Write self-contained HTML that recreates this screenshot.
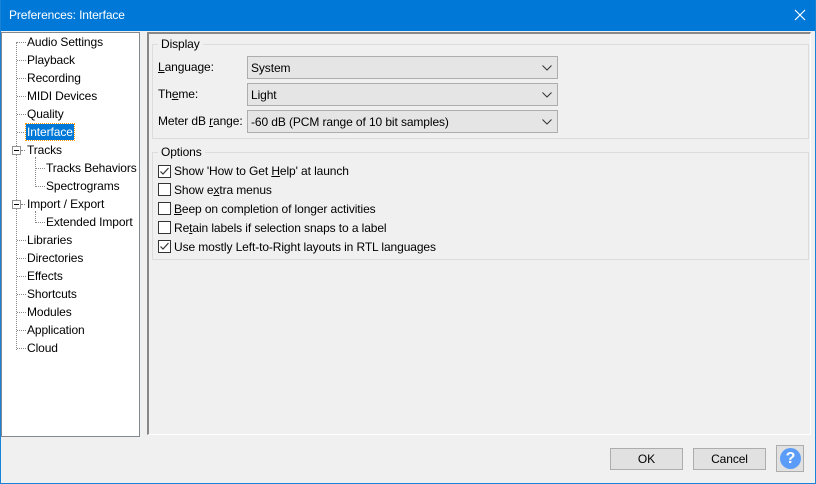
<!DOCTYPE html>
<html><head><style>
*{box-sizing:border-box;margin:0;padding:0}
body{width:816px;height:484px;background:#f0f0f0;font-family:"Liberation Sans",sans-serif;font-size:12px;letter-spacing:-0.1px;color:#000;position:relative;overflow:hidden}
.abs{position:absolute}
#win{left:0;top:0;width:816px;height:484px;border:1px solid #1883d7;border-top:none}
#title{left:0;top:0;width:816px;height:31px;background:#0078d7;color:#fff;font-size:12px;line-height:31px;padding-left:9px}
#tree{left:1px;top:32px;width:139px;height:405px;background:#fff;border:1px solid #828790}
.ti{position:absolute;white-space:nowrap;line-height:14px}
.dh{position:absolute;border-top:1px dotted #888;width:9px}
.dv{position:absolute;border-left:1px dotted #888}
#panel{left:147px;top:32px;width:664px;height:403px;border-left:2px solid #888;border-top:2px solid #888;border-right:1px solid #fff;border-bottom:1px solid #fff}
.grp{position:absolute;border:1px solid #dcdcdc}
.gl{position:absolute;background:#f0f0f0;padding:0 3px;top:-8px;left:5px;line-height:14px}
.combo{position:absolute;left:247px;width:311px;height:23px;background:#e5e5e5;border:1px solid #adadad;padding-left:3px;line-height:23px}
.combo svg{position:absolute;right:5px;top:8px}
.lbl{position:absolute;left:158px;line-height:14px}
.cb{position:absolute;left:158px;width:13px;height:13px;border:1px solid #333;background:#fff}
.ct{position:absolute;left:174px;line-height:14px}
.btn{position:absolute;top:448px;height:22px;background:#e1e1e1;border:1px solid #adadad;text-align:center;line-height:20px}
</style></head><body>
<div class="abs" id="title">Preferences: Interface</div>
<svg class="abs" style="left:794px;top:9px" width="12" height="12"><path d="M1 1L11 11M11 1L1 11" stroke="#fff" stroke-width="1.2"/></svg>
<div class="abs" id="win"></div>
<div class="abs" id="tree">
<div class="dv" style="left:14px;top:9px;height:308px"></div>
<div class="dh" style="left:15px;top:9px"></div><div class="ti" style="left:25px;top:2px">Audio Settings</div>
<div class="dh" style="left:15px;top:27px"></div><div class="ti" style="left:25px;top:20px">Playback</div>
<div class="dh" style="left:15px;top:45px"></div><div class="ti" style="left:25px;top:38px">Recording</div>
<div class="dh" style="left:15px;top:63px"></div><div class="ti" style="left:25px;top:56px">MIDI Devices</div>
<div class="dh" style="left:15px;top:81px"></div><div class="ti" style="left:25px;top:74px">Quality</div>
<div class="dh" style="left:15px;top:99px"></div><div class="ti" style="left:24px;top:91px;background:#0078d7;color:#fff;padding:0 1px;outline:1px dotted #f90;height:16px;line-height:16px">Interface</div>
<div style="position:absolute;left:10px;top:113px;width:9px;height:9px;border:1px solid #919191;background:#fff"><div style="position:absolute;left:1px;top:3px;width:5px;border-top:1px solid #000"></div></div>
<div class="dh" style="left:19px;top:117px;width:4px"></div><div class="ti" style="left:25px;top:110px">Tracks</div>
<div class="dv" style="left:33px;top:124px;height:30px"></div>
<div class="dh" style="left:34px;top:135px"></div><div class="ti" style="left:44px;top:128px">Tracks Behaviors</div>
<div class="dh" style="left:34px;top:153px"></div><div class="ti" style="left:44px;top:146px">Spectrograms</div>
<div style="position:absolute;left:10px;top:167px;width:9px;height:9px;border:1px solid #919191;background:#fff"><div style="position:absolute;left:1px;top:3px;width:5px;border-top:1px solid #000"></div></div>
<div class="dh" style="left:19px;top:171px;width:4px"></div><div class="ti" style="left:25px;top:164px">Import / Export</div>
<div class="dv" style="left:33px;top:178px;height:12px"></div>
<div class="dh" style="left:34px;top:189px"></div><div class="ti" style="left:44px;top:182px">Extended Import</div>
<div class="dh" style="left:15px;top:207px"></div><div class="ti" style="left:25px;top:200px">Libraries</div>
<div class="dh" style="left:15px;top:225px"></div><div class="ti" style="left:25px;top:218px">Directories</div>
<div class="dh" style="left:15px;top:243px"></div><div class="ti" style="left:25px;top:236px">Effects</div>
<div class="dh" style="left:15px;top:261px"></div><div class="ti" style="left:25px;top:254px">Shortcuts</div>
<div class="dh" style="left:15px;top:279px"></div><div class="ti" style="left:25px;top:272px">Modules</div>
<div class="dh" style="left:15px;top:297px"></div><div class="ti" style="left:25px;top:290px">Application</div>
<div class="dh" style="left:15px;top:315px"></div><div class="ti" style="left:25px;top:308px">Cloud</div>
</div>
<div class="abs" id="panel"></div>
<div class="grp" style="left:152px;top:44px;width:657px;height:95px"><div class="gl">Display</div></div>
<div class="lbl" style="top:60px"><u>L</u>anguage:</div>
<div class="combo" style="top:56px">System<svg width="10" height="6"><path d="M0.5 0.5L5 5L9.5 0.5" stroke="#333" fill="none"/></svg></div>
<div class="lbl" style="top:87px">Th<u>e</u>me:</div>
<div class="combo" style="top:83px">Light<svg width="10" height="6"><path d="M0.5 0.5L5 5L9.5 0.5" stroke="#333" fill="none"/></svg></div>
<div class="lbl" style="top:114px">Meter dB <u>r</u>ange:</div>
<div class="combo" style="top:110px">-60 dB (PCM range of 10 bit samples)<svg width="10" height="6"><path d="M0.5 0.5L5 5L9.5 0.5" stroke="#333" fill="none"/></svg></div>
<div class="grp" style="left:152px;top:152px;width:657px;height:108px"><div class="gl">Options</div></div>
<div class="cb" style="top:165px"><svg width="11" height="11" style="position:absolute;left:0;top:0"><path d="M1.5 5.5L4 8L9.5 2" stroke="#333" stroke-width="1.2" fill="none"/></svg></div><div class="ct" style="top:164px">Show 'How to Get <u>H</u>elp' at launch</div>
<div class="cb" style="top:183px"></div><div class="ct" style="top:183px">Show e<u>x</u>tra menus</div>
<div class="cb" style="top:202px"></div><div class="ct" style="top:202px"><u>B</u>eep on completion of longer activities</div>
<div class="cb" style="top:221px"></div><div class="ct" style="top:221px">Re<u>t</u>ain labels if selection snaps to a label</div>
<div class="cb" style="top:240px"><svg width="11" height="11" style="position:absolute;left:0;top:0"><path d="M1.5 5.5L4 8L9.5 2" stroke="#333" stroke-width="1.2" fill="none"/></svg></div><div class="ct" style="top:240px">Use mostly Left-to-Right layouts in RTL languages</div>
<div class="btn" style="left:610px;width:73px">OK</div>
<div class="btn" style="left:693px;width:73px">Cancel</div>
<div class="abs" style="left:776px;top:445px;width:28px;height:27px;border:1px solid #adadad;background:#e1e1e1"><div style="position:absolute;left:3px;top:2px;width:21px;height:21px;border-radius:50%;background:#5b9cf8;color:#fff;font-weight:bold;font-size:16px;text-align:center;line-height:21px">?</div></div>
</body></html>
